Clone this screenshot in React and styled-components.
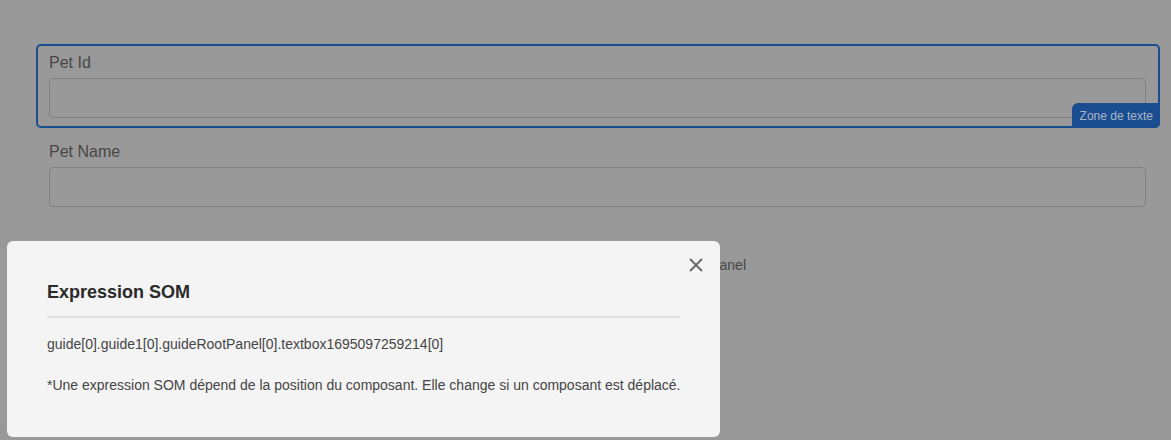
import styled, { createGlobalStyle } from "styled-components";

const Global = createGlobalStyle`
  html, body {
    margin: 0;
    background: #999999;
    font-family: "Liberation Sans", Arial, sans-serif;
  }
`;

const Page = styled.div`
  position: relative;
  height: 440px;
  overflow: hidden;
  padding: 44px 11px 0 36px;
  box-sizing: border-box;
`;

const Field = styled.div`
  position: relative;
  height: 84px;
  box-sizing: border-box;
  margin-bottom: 5px;
  padding: 8px 12px 8px 11px;
  border: 2px solid ${(p) => (p.selected ? "#1b4e91" : "transparent")};
  border-radius: 5px;
`;

const Label = styled.div`
  font-size: 16px;
  line-height: 18px;
  color: #474747;
  margin-bottom: 6px;
`;

const Input = styled.div`
  height: 40px;
  box-sizing: border-box;
  border: 1px solid #808080;
  border-radius: 4px;
`;

const Badge = styled.div`
  position: absolute;
  right: -2px;
  bottom: -2px;
  height: 25px;
  padding: 0 7px 0 8px;
  display: flex;
  align-items: center;
  background: #1b4e91;
  color: #a9b4c5;
  font-size: 12px;
  border-radius: 6px 0 5px 0;
`;

const Hint = styled.div`
  width: 710px;
  text-align: right;
  margin-top: 40px;
  font-size: 14px;
  color: #474747;
`;

const Dialog = styled.div`
  position: absolute;
  left: 7px;
  top: 241px;
  width: 713px;
  height: 196px;
  box-sizing: border-box;
  padding: 40px 40px 0;
  background: #f4f4f4;
  border-radius: 6px;
`;

const Title = styled.h2`
  margin: 0;
  font-size: 18px;
  line-height: 22px;
  font-weight: 700;
  color: #2a2a2a;
`;

const Divider = styled.hr`
  margin: 13px 0 18px;
  border: 0;
  height: 2px;
  background: #e0e0e0;
`;

const Text = styled.p`
  margin: 0 0 ${(p) => p.gap || 0}px;
  font-size: 14px;
  line-height: 16px;
  white-space: nowrap;
  color: #454545;
`;

const Close = styled.button`
  position: absolute;
  top: 15px;
  right: 15px;
  width: 18px;
  height: 18px;
  padding: 0;
  border: 0;
  background: none;
  display: flex;
  align-items: center;
  justify-content: center;
`;

export default function App() {
  return (
    <>
      <Global />
      <Page>
        <Field selected>
          <Label>Pet Id</Label>
          <Input />
          <Badge>Zone de texte</Badge>
        </Field>
        <Field>
          <Label>Pet Name</Label>
          <Input />
        </Field>
        <Hint>Déposez des composants ici pour les ajouter au Panel</Hint>
        <Dialog>
          <Close>
            <svg width="14" height="14" viewBox="0 0 14 14">
              <path d="M1 1L13 13M13 1L1 13" stroke="#6b6b6b" strokeWidth="2" />
            </svg>
          </Close>
          <Title>Expression SOM</Title>
          <Divider />
          <Text gap={25}>guide[0].guide1[0].guideRootPanel[0].textbox1695097259214[0]</Text>
          <Text>
            *Une expression SOM dépend de la position du composant. Elle change si un composant est déplacé.
          </Text>
        </Dialog>
      </Page>
    </>
  );
}
